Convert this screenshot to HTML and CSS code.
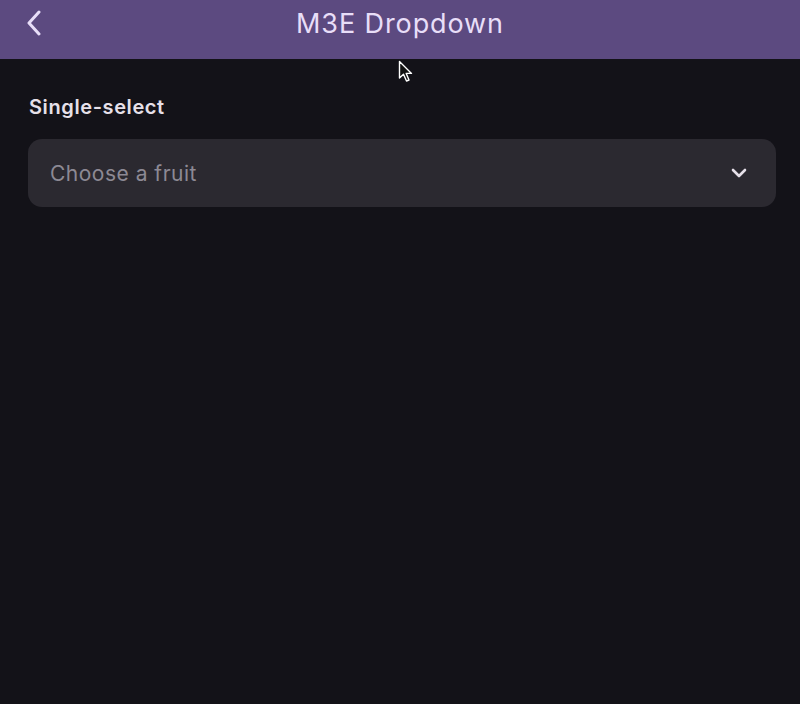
FILE: index.html
```html
<!DOCTYPE html>
<html>
<head>
<meta charset="utf-8">
<link rel="stylesheet" href="styles.css">
</head>
<body>
<header class="appbar">
  <button class="back" aria-label="Back">
    <svg width="16" height="26" viewBox="0 0 16 26"><path d="M13 2 L3 13 L13 24" fill="none" stroke="#e8def8" stroke-width="3" stroke-linecap="round" stroke-linejoin="round"/></svg>
  </button>
  <h1 class="title">M3E Dropdown</h1>
</header>
<main class="content">
  <label class="field-label">Single-select</label>
  <div class="select">
    <span class="placeholder">Choose a fruit</span>
    <svg class="chev" width="18" height="12" viewBox="0 0 18 12"><path d="M3 3 L9 9 L15 3" fill="none" stroke="#e6e0e9" stroke-width="2.6" stroke-linecap="round" stroke-linejoin="round"/></svg>
  </div>
</main>
<svg class="cursor" width="16" height="24" viewBox="0 0 16 24"><path d="M1.5 1.5 L1.5 18 L5.5 14.2 L8.5 21 L11 20 L8.2 13.4 L13.5 13.4 Z" fill="#111" stroke="#fff" stroke-width="1.4" stroke-linejoin="round"/></svg>
</body>
</html>
```
FILE: styles.css
```css
html, body {
  margin: 0;
  padding: 0;
  background: #131218;
  height: 100%;
}
body {
  font-family: Inter, "Noto Sans", sans-serif;
  position: relative;
  overflow: hidden;
}
.appbar {
  height: 59px;
  background: #5c4a80;
  display: flex;
  align-items: center;
  justify-content: center;
  position: relative;
}
.back {
  position: absolute;
  left: 26px;
  top: 10px;
  background: none;
  border: 0;
  padding: 0;
  display: flex;
}
.title {
  margin: 0;
  font-family: Inter, sans-serif;
  font-weight: 400;
  font-size: 27px;
  color: #e8def8;
  letter-spacing: 0.9px;
  margin-top: -12px;
}
.content {
  padding: 35px 24px 0 28px;
  display: flex;
  flex-direction: column;
}
.field-label {
  font-size: 20px;
  font-weight: 600;
  color: #e6e0e9;
  line-height: 26px;
  letter-spacing: 0.6px;
  padding-left: 1px;
}
.select {
  margin-top: 19px;
  height: 68px;
  background: #2b2930;
  border-radius: 14px;
  display: flex;
  align-items: center;
  justify-content: space-between;
  padding: 0 28px 0 22px;
}
.placeholder {
  font-size: 21px;
  color: #8d8994;
  letter-spacing: 0.5px;
}
.chev {
  display: block;
}
.cursor {
  position: absolute;
  left: 398px;
  top: 60px;
}
```
